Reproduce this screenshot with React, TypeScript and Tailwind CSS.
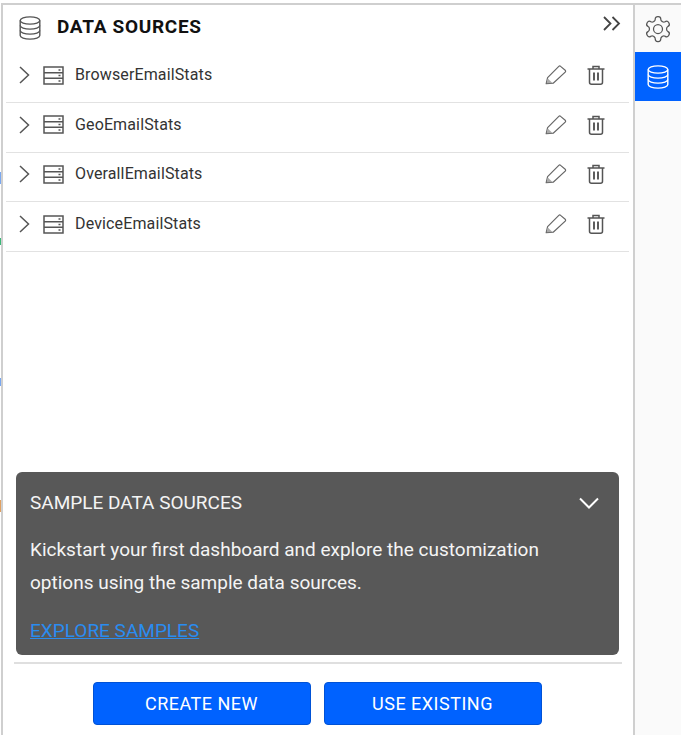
const SOURCES = ["BrowserEmailStats", "GeoEmailStats", "OverallEmailStats", "DeviceEmailStats"];

function ServerIcon() {
  return (
    <svg width="21" height="19" viewBox="0 0 21 19" fill="none" stroke="#555" strokeWidth="1.5">
      <rect x="1" y="1" width="19" height="17" />
      <path d="M1 6.7h19M1 12.3h19" />
      <path d="M15.5 3.9h2M15.5 9.5h2M15.5 15.1h2" />
    </svg>
  );
}

function DbIcon({ color }: { color: string }) {
  return (
    <svg width="22" height="24" viewBox="0 0 22 24" fill="none" stroke={color} strokeWidth="1.4">
      <ellipse cx="11" cy="4.5" rx="9.8" ry="3.6" />
      <path d="M1.2 4.5v15c0 2 4.4 3.6 9.8 3.6s9.8-1.6 9.8-3.6v-15" />
      <path d="M1.2 9.5c0 2 4.4 3.6 9.8 3.6s9.8-1.6 9.8-3.6" />
      <path d="M1.2 14.5c0 2 4.4 3.6 9.8 3.6s9.8-1.6 9.8-3.6" />
    </svg>
  );
}

function GearIcon() {
  return (
    <svg width="30" height="30" viewBox="0 0 24 24" fill="none" stroke="#555" strokeWidth="1" strokeLinejoin="round">
      <path d="M12.22 2h-.44a2 2 0 0 0-2 2v.18a2 2 0 0 1-1 1.73l-.43.25a2 2 0 0 1-2 0l-.15-.08a2 2 0 0 0-2.73.73l-.22.38a2 2 0 0 0 .73 2.73l.15.1a2 2 0 0 1 1 1.72v.51a2 2 0 0 1-1 1.74l-.15.09a2 2 0 0 0-.73 2.73l.22.38a2 2 0 0 0 2.73.73l.15-.08a2 2 0 0 1 2 0l.43.25a2 2 0 0 1 1 1.73V20a2 2 0 0 0 2 2h.44a2 2 0 0 0 2-2v-.18a2 2 0 0 1 1-1.73l.43-.25a2 2 0 0 1 2 0l.15.08a2 2 0 0 0 2.73-.73l.22-.39a2 2 0 0 0-.73-2.73l-.15-.08a2 2 0 0 1-1-1.74v-.5a2 2 0 0 1 1-1.74l.15-.09a2 2 0 0 0 .73-2.73l-.22-.38a2 2 0 0 0-2.73-.73l-.15.08a2 2 0 0 1-2 0l-.43-.25a2 2 0 0 1-1-1.73V4a2 2 0 0 0-2-2z" />
      <circle cx="12" cy="12" r="3.6" />
    </svg>
  );
}

function PencilIcon() {
  return (
    <svg width="22" height="20" viewBox="0 0 22 20" fill="none" stroke="#666" strokeWidth="1.2" strokeLinejoin="round">
      <path d="M1.2 18.6l1.4-6L13.8 1.4a1.3 1.3 0 0 1 1.8 0l4.6 3.8a1.3 1.3 0 0 1 0 1.9L8.2 18.2z" />
      <path d="M1.6 18.2l1.2-4.8 4.6 4.6z" fill="#aaa" stroke="none" />
    </svg>
  );
}

function TrashIcon() {
  return (
    <svg width="18" height="20" viewBox="0 0 18 20" fill="none" stroke="#555" strokeWidth="1.5">
      <path d="M0.5 4h17" />
      <path d="M6 4V1.5h6V4" />
      <path d="M2.5 4v13.2a2 2 0 0 0 2 2h9a2 2 0 0 0 2-2V4" />
      <path d="M7 7.5v8M11 7.5v8" strokeWidth="1.9" />
    </svg>
  );
}

function SourceRow({ name }: { name: string }) {
  return (
    <div className="flex h-[49.7px] items-center border-b border-[#e2e2e2] pb-[5px]">
      <svg className="ml-[13px]" width="11" height="18" viewBox="0 0 11 18" fill="none" stroke="#555" strokeWidth="1.5">
        <path d="M1 1l8.5 8L1 17" />
      </svg>
      <div className="ml-[13px]">
        <ServerIcon />
      </div>
      <span className="ml-[11px] text-[16px] tracking-[0.13px] text-[#333]">{name}</span>
      <div className="ml-auto flex items-center gap-[20px] pr-[24px]">
        <PencilIcon />
        <TrashIcon />
      </div>
    </div>
  );
}

export default function App() {
  return (
    <div className="relative flex h-[735px] w-[681px] overflow-hidden bg-white pt-[3px] pl-[1px] font-['Roboto',sans-serif]">
      <div className="absolute left-0 top-[172px] h-[12px] w-[1px] bg-[#7aa8f0]" />
      <div className="absolute left-0 top-[238px] h-[7px] w-[1px] bg-[#3cb878]" />
      <div className="absolute left-0 top-[378px] h-[8px] w-[1px] bg-[#7aa8f0]" />
      <div className="absolute left-0 top-[500px] h-[12px] w-[1px] bg-[#e0a060]" />
      <div className="flex w-[634px] flex-col border-x-2 border-t-2 border-[#cfcfcf]">
        <div className="flex h-[45px] shrink-0 items-center pl-[16px] pr-[12px]">
          <DbIcon color="#555" />
          <span className="ml-[16px] text-[19px] font-bold tracking-[0.7px] text-[#111]">DATA SOURCES</span>
          <svg className="mb-[9px] ml-auto" width="18" height="15" viewBox="0 0 18 15" fill="none" stroke="#444" strokeWidth="1.8">
            <path d="M1 1l6.5 6.5L1 14M9.5 1l6.5 6.5L9.5 14" />
          </svg>
        </div>
        <div className="mr-[4px] ml-[3px] mt-[3.2px] flex flex-col">
          {SOURCES.map((s) => (
            <SourceRow key={s} name={s} />
          ))}
        </div>
        <div className="mt-auto px-[11px]">
          <div className="ml-[2px] mr-[3px] rounded-[6px] bg-[#585858] px-[14px] pt-[18px] pb-[11px] text-[#f4f4f4]">
            <div className="flex items-center justify-between pr-[6px]">
              <span className="text-[19px] leading-[26px]">SAMPLE DATA SOURCES</span>
              <svg width="20" height="12" viewBox="0 0 20 12" fill="none" stroke="#fff" strokeWidth="2">
                <path d="M1 1.5l9 9 9-9" />
              </svg>
            </div>
            <p className="mt-[17px] text-[19px] leading-[33px]">
              Kickstart your first dashboard and explore the customization
              <br />
              options using the sample data sources.
            </p>
            <a className="mt-[19px] block text-[19px] leading-[26px] text-[#2a8cf0] underline">EXPLORE SAMPLES</a>
          </div>
          <div className="mt-[7px] h-[2px] bg-[#dfdfdf]" />
          <div className="flex justify-center gap-[13px] pt-[18px] pb-[10px] pr-[2px]">
            <button className="h-[43px] w-[218px] rounded-[4px] border border-[#0052d6] bg-[#0062ff] text-[18px] tracking-[0.5px] text-white">
              CREATE NEW
            </button>
            <button className="h-[43px] w-[218px] rounded-[4px] border border-[#0052d6] bg-[#0062ff] text-[18px] tracking-[0.5px] text-white">
              USE EXISTING
            </button>
          </div>
        </div>
      </div>
      <div className="flex flex-1 flex-col border-t-2 border-[#cfcfcf] bg-[#fafafa]">
        <div className="flex h-[47px] items-center justify-center">
          <GearIcon />
        </div>
        <div className="flex h-[49px] items-center justify-center bg-[#0062ff]">
          <DbIcon color="#fff" />
        </div>
      </div>
    </div>
  );
}
